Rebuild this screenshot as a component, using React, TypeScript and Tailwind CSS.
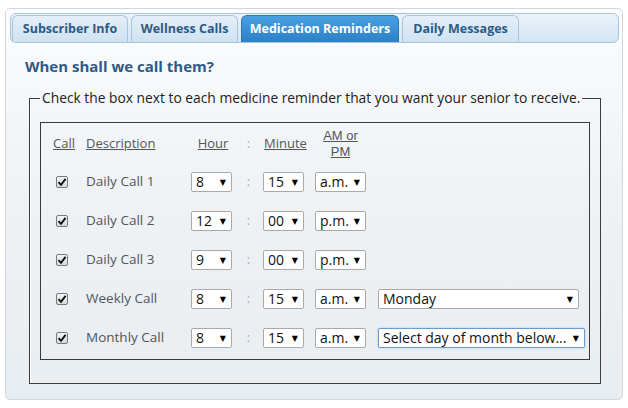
import React from "react";

const Sel = ({ w, text, focus }: { w: number; text: string; focus?: boolean }) => (
  <div
    style={{ width: w }}
    className={`h-[20px] flex items-center justify-between bg-white rounded-[2px] pl-[4px] pr-[5px] text-[14px] text-[#111] leading-none ${
      focus ? "border border-[#6f9bc8] shadow-[0_0_2px_#9cc0e4]" : "border border-[#a9a9a9]"
    }`}
  >
    <span className="whitespace-nowrap">{text}</span>
    <span className="text-[8px] text-black">▼</span>
  </div>
);

const Check = () => (
  <div className="w-[12px] h-[12px] border border-[#7a7a7a] rounded-[2px] bg-gradient-to-b from-[#f4f4f4] to-[#d9d9d9] flex items-center justify-center">
    <svg width="10" height="10" viewBox="0 0 10 10">
      <path d="M1.5 5.2 L4 7.8 L8.6 1.8" stroke="#111" strokeWidth="1.9" fill="none" />
    </svg>
  </div>
);

const rows = [
  { d: "Daily Call 1", h: "8", m: "15", a: "a.m." },
  { d: "Daily Call 2", h: "12", m: "00", a: "p.m." },
  { d: "Daily Call 3", h: "9", m: "00", a: "p.m." },
  { d: "Weekly Call", h: "8", m: "15", a: "a.m.", extra: "week" },
  { d: "Monthly Call", h: "8", m: "15", a: "a.m.", extra: "month" },
];

export default function App() {
  const tabs = [
    { t: "Subscriber Info", w: 116, active: false },
    { t: "Wellness Calls", w: 107, active: false },
    { t: "Medication Reminders", w: 158, active: true },
    { t: "Daily Messages", w: 117, active: false },
  ];
  return (
    <div
      className="w-[628px] h-[408px] bg-white pt-[8px] px-[5px]"
      style={{ fontFamily: '"Open Sans", "DejaVu Sans", sans-serif' }}
    >
      <div className="h-[392px] border border-[#d3d7db] rounded-[5px] bg-gradient-to-b from-[#fbfcfd] via-[#eef2f5] to-[#e8edf1] p-[4px] pr-[3px]">
        <div className="h-[30px] border border-[#a8c5dd] rounded-[6px] bg-gradient-to-b from-[#eaf3fa] to-[#d3e5f3] flex items-end pl-[1px] gap-[3px]">
          {tabs.map((t) => (
            <div
              key={t.t}
              style={{ width: t.w }}
              className={`h-[27px] rounded-t-[6px] border border-b-0 flex items-center justify-center text-[12.5px] font-bold ${
                t.active
                  ? "bg-gradient-to-b from-[#4aa0e0] to-[#2c80c6] border-[#2a78b8] text-white"
                  : "bg-gradient-to-b from-[#e4eff8] to-[#cfe2f2] border-[#a8c5dd] text-[#2c5a86]"
              }`}
            >
              {t.t}
            </div>
          ))}
        </div>
        <div className="mt-[13px] pl-[15px] text-[15px] leading-[20px] font-bold text-[#2d5a89]">
          When shall we call them?
        </div>
        <fieldset className="mt-[13px] ml-[19px] mr-[18px] border border-[#3e3e3e] shadow-[inset_1px_1px_0_#ffffff] px-[10px] pt-[15px] pb-[23px]">
          <legend className="px-[2px] text-[13.8px] leading-[18px] text-[#222] whitespace-nowrap">
            Check the box next to each medicine reminder that you want your senior to receive.
          </legend>
          <div className="border border-[#3a3a3a] pt-[5px] pb-[2px] pl-[12px] text-[13px] text-[#555]">
            <div className="flex items-start leading-[16px] h-[34px]">
              <div className="w-[33px] pt-[7px] underline">Call</div>
              <div className="w-[105px] pt-[7px] underline">Description</div>
              <div className="w-[52px] pt-[7px]">
                <div className="w-[41px] text-center underline pl-[3px]">Hour</div>
              </div>
              <div className="w-[11px] pt-[7px] text-center text-[#aaa]">:</div>
              <div className="w-[61px] pt-[7px] pl-[10px] underline">Minute</div>
              <div
                className="w-[51px] text-center text-[13px]"
                style={{ fontFamily: '"Liberation Sans", Arial, sans-serif' }}
              >
                <div className="underline">AM or</div>
                <div className="underline">PM</div>
              </div>
            </div>
            {rows.map((r) => (
              <div key={r.d} className="h-[39px] flex items-center">
                <div className="w-[33px] pl-[3px]">
                  <Check />
                </div>
                <div className="w-[105px] text-[13.5px] text-[#555]">{r.d}</div>
                <div className="w-[52px]">
                  <Sel w={41} text={r.h} />
                </div>
                <div className="w-[11px] text-center text-[#aaa]">:</div>
                <div className="w-[61px] pl-[9px]">
                  <Sel w={41} text={r.m} />
                </div>
                <div className="w-[63px]">
                  <Sel w={51} text={r.a} />
                </div>
                {r.extra === "week" && <Sel w={201} text="Monday" />}
                {r.extra === "month" && <Sel w={207} text="Select day of month below..." focus />}
              </div>
            ))}
          </div>
        </fieldset>
      </div>
    </div>
  );
}
